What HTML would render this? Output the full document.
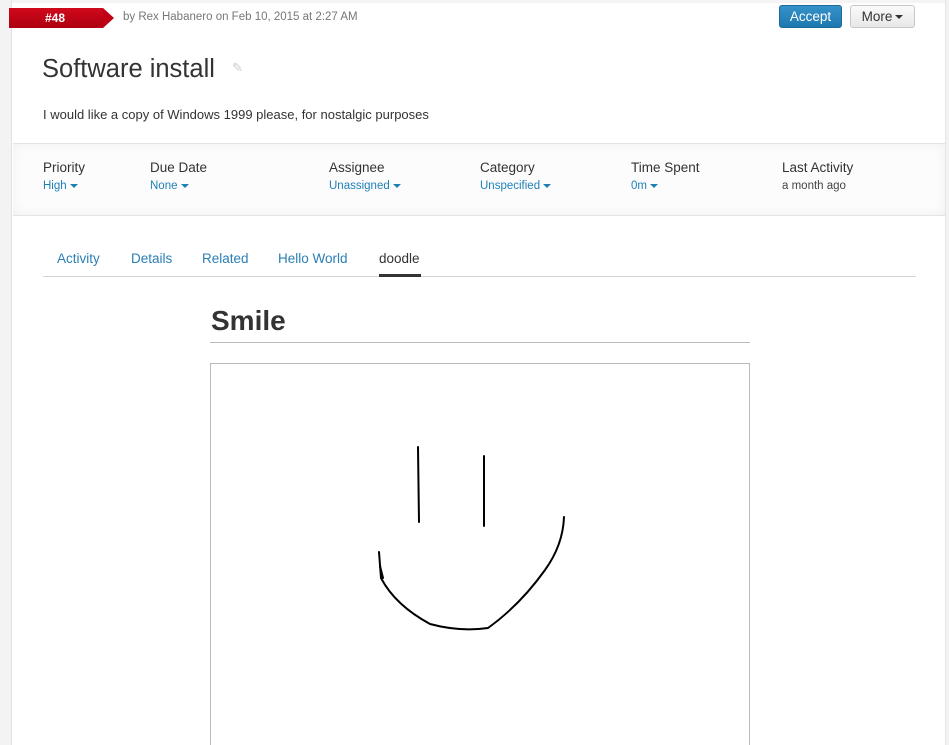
<!DOCTYPE html>
<html style="overflow:hidden;width:949px;height:745px"><head><meta charset="utf-8"><style>
*{margin:0;padding:0;box-sizing:border-box}
body{width:949px;height:745px;overflow:hidden;background:#fff;font-family:"Liberation Sans",sans-serif;position:relative;color:#333}
.lb{position:absolute;left:0;top:0;width:12px;height:745px;background:#f3f3f3;border-right:1px solid #e2e2e2}
.rb{position:absolute;left:945px;top:0;width:4px;height:745px;background:#f3f3f3;border-left:1px solid #e6e6e6}
.topline{position:absolute;left:12px;top:0;right:4px;height:3px;background:#f4f4f4}
.badge{position:absolute;left:9px;top:8px;width:94px;height:20px;background:linear-gradient(#d0091c,#ad0010);color:#fff;font-weight:bold;font-size:12px;line-height:20px;padding-left:36px}
.badge:after{content:"";position:absolute;right:-11px;top:0;border-left:11px solid #c00016;border-top:10px solid transparent;border-bottom:10px solid transparent}
.by{position:absolute;left:123px;top:11px;font-size:11.5px;color:#777}
.acc{position:absolute;left:779px;top:5px;width:63px;height:23px;background:linear-gradient(#3592c8,#1e78b0);border:1px solid #1a6a9c;border-radius:3px;color:#fff;font-size:13.5px;line-height:21px;text-align:center}
.more{position:absolute;left:850px;top:5px;width:65px;height:23px;background:linear-gradient(#fafafa,#e8e8e8);border:1px solid #c8c8c8;border-radius:3px;color:#333;font-size:13.5px;line-height:21px;text-align:center}
.tri{display:inline-block;border-top:4px solid currentColor;border-left:4px solid transparent;border-right:4px solid transparent;vertical-align:middle;margin-left:3px}
h1{position:absolute;left:42px;top:55px;font-weight:normal;font-size:25.5px;color:#333}
.pen{position:absolute;left:232px;top:60px;color:#ccc;font-size:13px}
.desc{position:absolute;left:43px;top:107px;font-size:13px;color:#333}
.meta{position:absolute;left:13px;top:143px;width:932px;height:73px;background:#fcfcfc;border-top:1px solid #e4e4e4;border-bottom:1px solid #e4e4e4;box-shadow:inset 0 0 12px rgba(0,0,0,0.05)}
.f{position:absolute;top:160px;font-size:13.5px;color:#333}
.f span{display:block;font-size:11.5px;color:#1f80b8;margin-top:5px}
.f span.g{color:#444}
.tabs{position:absolute;left:43px;top:276px;width:873px;border-top:1px solid #d4d4d4}
.t{position:absolute;top:251px;font-size:13.5px;color:#2a7fb5}
.t.a{color:#333}
.ul{position:absolute;left:379px;top:274px;width:42px;height:3px;background:#333}
.sm{position:absolute;left:211px;top:305px;font-size:28px;font-weight:bold;color:#333}
.smline{position:absolute;left:210px;top:342px;width:540px;border-top:1px solid #bbb}
.cv{position:absolute;left:210px;top:363px;width:540px;height:400px;border:1px solid #bbb}
</style></head><body>
<div class="lb"></div><div class="rb"></div><div class="topline"></div>
<div class="badge">#48</div>
<div class="by">by Rex Habanero on Feb 10, 2015 at 2:27 AM</div>
<div class="acc">Accept</div>
<div class="more">More<span class="tri"></span></div>
<h1>Software install</h1>
<div class="pen">✎</div>
<div class="desc">I would like a copy of Windows 1999 please, for nostalgic purposes</div>
<div class="meta"></div>
<div class="f" style="left:43px">Priority<span>High<i class="tri"></i></span></div>
<div class="f" style="left:150px">Due Date<span>None<i class="tri"></i></span></div>
<div class="f" style="left:329px">Assignee<span>Unassigned<i class="tri"></i></span></div>
<div class="f" style="left:480px">Category<span>Unspecified<i class="tri"></i></span></div>
<div class="f" style="left:631px">Time Spent<span>0m<i class="tri"></i></span></div>
<div class="f" style="left:782px">Last Activity<span class="g">a month ago</span></div>
<div class="t" style="left:57px">Activity</div>
<div class="t" style="left:131px">Details</div>
<div class="t" style="left:202px">Related</div>
<div class="t" style="left:278px">Hello World</div>
<div class="t a" style="left:379px">doodle</div>
<div class="tabs"></div><div class="ul"></div>
<div class="sm">Smile</div>
<div class="smline"></div>
<div class="cv"></div>
<svg style="position:absolute;left:0;top:0" width="949" height="745" fill="none" stroke="#000" stroke-width="2" stroke-linecap="round">
<path d="M418 447 L419 522"/>
<path d="M484 456 L484 526"/>
<path d="M379 552 L381 578 Q395 605 430 624 Q460 632 488 628 Q520 605 545 570 Q563 545 564 517"/>
<path d="M380 566 L383 578"/>
</svg>
</body></html>
